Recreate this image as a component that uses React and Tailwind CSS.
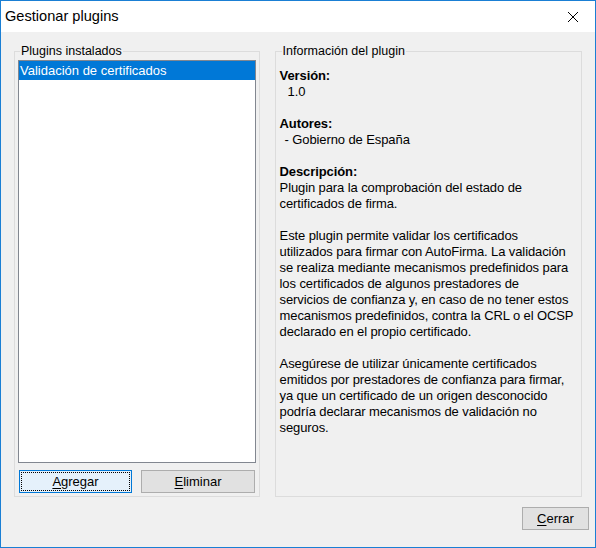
import React from 'react';

const GroupBox = ({ title, className = '', children }) => (
    <fieldset className={`border border-[#dcdcdc] m-0 ${className}`}>
        <legend className="ml-[2px] px-[1px] text-[12.5px] leading-[14px] text-black">{title}</legend>
        {children}
    </fieldset>
);

const Button = ({ label, mnemonic, focused = false, className = '' }) => {
    const rest = label.slice(1);
    return (
        <button
            className={`h-[23px] text-[13px] text-black border ${
                focused ? 'border-[#0078d7] bg-[#e5f1fb]' : 'border-[#adadad] bg-[#e1e1e1]'
            } ${className}`}
        >
            <span
                className={`flex items-center justify-center w-full h-full ${
                    focused ? 'outline outline-1 outline-dotted outline-black -outline-offset-2' : ''
                }`}
            >
                <span className="underline underline-offset-2">{mnemonic}</span>
                {rest}
            </span>
        </button>
    );
};

export default function App() {
    return (
        <div
            className="w-[596px] h-[548px] flex flex-col border border-[#1a7fd4] bg-[#f0f0f0] overflow-hidden"
            style={{ fontFamily: '"Liberation Sans", Arial, sans-serif' }}
        >
            {/* title bar */}
            <div className="h-[31px] shrink-0 bg-white flex items-center justify-between pl-[4px] pr-[16px]">
                <span className="text-[14.6px] text-black">Gestionar plugins</span>
                <svg width="12" height="12" viewBox="0 0 12 12">
                    <path d="M1 1L11 11M11 1L1 11" stroke="#000" strokeWidth="1" />
                </svg>
            </div>

            <div className="flex-1 flex flex-col px-[13px] pt-[12px]">
                <div className="flex gap-[15px] h-[453px]">
                    <GroupBox title="Plugins instalados" className="w-[246px] flex flex-col px-[3px] pb-[3px]">
                        <div className="flex flex-col h-full pt-[2px]">
                            <div className="flex-1 bg-white border border-[#828790]">
                                <div className="h-[19px] bg-[#0078d7] text-white text-[13px] leading-[19px] px-[1px]">
                                    Validación de certificados
                                </div>
                            </div>
                            <div className="flex gap-[9px] mt-[7px] pl-[1px]">
                                <Button label="Agregar" mnemonic="A" focused className="w-[113px]" />
                                <Button label="Eliminar" mnemonic="E" className="w-[114px]" />
                            </div>
                        </div>
                    </GroupBox>

                    <GroupBox title="Información del plugin" className="w-[308px] px-[4px]">
                        <div className="text-[13px] leading-[16px] text-black pt-[10px] whitespace-nowrap tracking-[-0.1px]">
                            <div className="font-bold">Versión:</div>
                            <div className="pl-[8px]">1.0</div>
                            <div className="h-[16px]" />
                            <div className="font-bold">Autores:</div>
                            <div className="pl-[5px]">- Gobierno de España</div>
                            <div className="h-[16px]" />
                            <div className="font-bold">Descripción:</div>
                            <p>Plugin para la comprobación del estado de<br />certificados de firma.</p>
                            <div className="h-[16px]" />
                            <p>
                                Este plugin permite validar los certificados<br />
                                utilizados para firmar con AutoFirma. La validación<br />
                                se realiza mediante mecanismos predefinidos para<br />
                                los certificados de algunos prestadores de<br />
                                servicios de confianza y, en caso de no tener estos<br />
                                mecanismos predefinidos, contra la CRL o el OCSP<br />
                                declarado en el propio certificado.
                            </p>
                            <div className="h-[16px]" />
                            <p>
                                Asegúrese de utilizar únicamente certificados<br />
                                emitidos por prestadores de confianza para firmar,<br />
                                ya que un certificado de un origen desconocido<br />
                                podría declarar mecanismos de validación no<br />
                                seguros.
                            </p>
                        </div>
                    </GroupBox>
                </div>

                <div className="flex justify-end mt-[10px] -mr-[7px]">
                    <Button label="Cerrar" mnemonic="C" className="w-[67px]" />
                </div>
            </div>
        </div>
    );
}
